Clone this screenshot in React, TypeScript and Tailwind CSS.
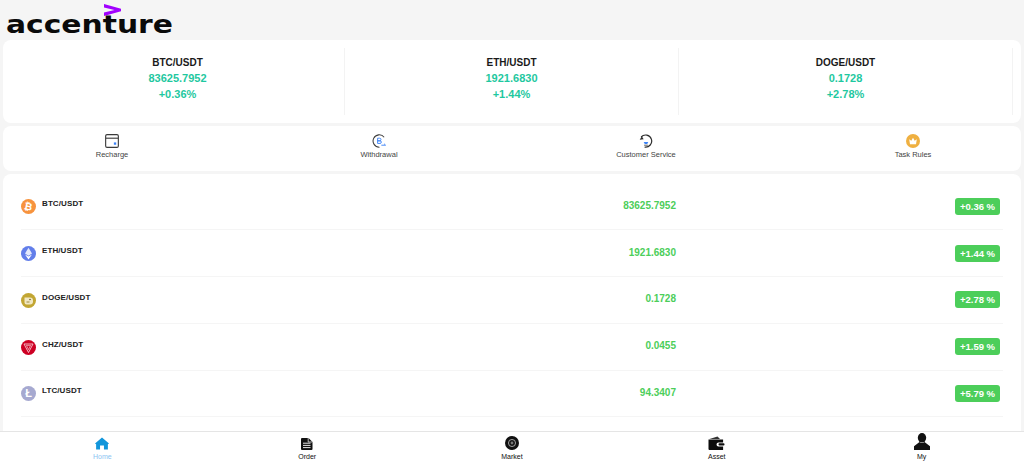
import type { ReactNode } from 'react'

const tickers = [
  { name: 'BTC/USDT', price: '83625.7952', change: '+0.36%' },
  { name: 'ETH/USDT', price: '1921.6830', change: '+1.44%' },
  { name: 'DOGE/USDT', price: '0.1728', change: '+2.78%' },
]

function BtcIcon() {
  return (
    <div className="w-[15px] h-[15px] rounded-full bg-[#f7933e] flex items-center justify-center text-[10px] leading-none font-bold text-white">
      <span className="rotate-12">₿</span>
    </div>
  )
}

function EthIcon() {
  return (
    <svg width="15" height="15" viewBox="0 0 15 15">
      <circle cx="7.5" cy="7.5" r="7.5" fill="#627eea" />
      <path d="M7.5 1.8 11 7.6 7.5 9.7 4 7.6z" fill="#e4e9fb" />
      <path d="M7.5 10.6 11 8.5 7.5 13.4 4 8.5z" fill="#fff" />
    </svg>
  )
}

function DogeIcon() {
  return (
    <svg width="15" height="15" viewBox="0 0 15 15">
      <circle cx="7.5" cy="7.5" r="7.5" fill="#c2a633" />
      <path d="M3.5 4.5h5.5a3 3 0 0 1 3 3v1a3 3 0 0 1-3 3H5.5a2 2 0 0 1-2-2z" fill="#f1e8c4" />
      <circle cx="9" cy="6.5" r="0.8" fill="#6b5a14" />
      <path d="M5.5 9h3" stroke="#8a7420" strokeWidth="0.8" />
    </svg>
  )
}

function ChzIcon() {
  return (
    <svg width="15" height="15" viewBox="0 0 15 15" fill="none">
      <circle cx="7.5" cy="7.5" r="7.5" fill="#cd0124" />
      <path d="M3 4h9L7.5 12.5z" stroke="#f7c6cf" strokeWidth="0.9" />
      <path d="M5.4 5.4h4.2L7.5 9.6z" stroke="#f7c6cf" strokeWidth="0.7" />
    </svg>
  )
}

function LtcIcon() {
  return (
    <div className="w-[15px] h-[15px] rounded-full bg-[#a6a9d0] flex items-center justify-center text-[11px] leading-none font-bold text-white">
      Ł
    </div>
  )
}

const coins = [
  { name: 'BTC/USDT', price: '83625.7952', change: '+0.36 %', icon: <BtcIcon /> },
  { name: 'ETH/USDT', price: '1921.6830', change: '+1.44 %', icon: <EthIcon /> },
  { name: 'DOGE/USDT', price: '0.1728', change: '+2.78 %', icon: <DogeIcon /> },
  { name: 'CHZ/USDT', price: '0.0455', change: '+1.59 %', icon: <ChzIcon /> },
  { name: 'LTC/USDT', price: '94.3407', change: '+5.79 %', icon: <LtcIcon /> },
]

function RechargeIcon() {
  return (
    <svg width="14" height="14" viewBox="0 0 15 15" fill="none">
      <rect x="0.7" y="0.7" width="13.6" height="13.6" rx="1.5" stroke="#3a3a3a" strokeWidth="1.2" />
      <path d="M1 4.5h13" stroke="#3a3a3a" strokeWidth="1.2" />
      <rect x="9.5" y="9" width="2.5" height="2.5" fill="#3b82f6" />
    </svg>
  )
}

function WithdrawIcon() {
  return (
    <svg width="14" height="14" viewBox="0 0 15 15" fill="none">
      <path d="M13 3.5A6.6 6.6 0 1 0 8 14.1" stroke="#3a3a3a" strokeWidth="1.1" />
      <path d="M10 12h4.5M13 10.5l1.5 1.5" stroke="#3b82f6" strokeWidth="1" />
      <path d="M6 4.5h2.2a1.3 1.3 0 0 1 0 2.8H6h2.6a1.4 1.4 0 0 1 0 2.8H6z" stroke="#3b82f6" strokeWidth="1" />
    </svg>
  )
}

function ServiceIcon() {
  return (
    <svg width="14" height="14" viewBox="0 0 15 15" fill="none">
      <path d="M2.3 3.2A6.5 6.5 0 1 1 6 14" stroke="#2f2f2f" strokeWidth="1.3" />
      <path d="M0.8 6.2 3 2.4l2 3.2z" fill="#2f2f2f" />
      <path d="M5 8.6h5l-1.2 2H6.2z" fill="#3b82f6" />
      <path d="M5.5 12h4" stroke="#555" strokeWidth="1" />
    </svg>
  )
}

function CrownIcon() {
  return (
    <svg width="14" height="14" viewBox="0 0 14 14">
      <circle cx="7" cy="7" r="7" fill="#efb041" />
      <path d="M3.2 5.2 5.3 6.8 7 3.8l1.7 3 2.1-1.6-.8 5H4z" fill="#fff" />
    </svg>
  )
}

function HomeIcon() {
  return (
    <svg width="14" height="13" viewBox="0 0 15 13">
      <path d="M7.5 0 15 6.4 13.8 7.4V13H9.6V8.6H5.4V13H1.2V7.4L0 6.4z" fill="#1296db" />
    </svg>
  )
}

function OrderIcon() {
  return (
    <svg width="12" height="12" viewBox="0 0 12 12">
      <path d="M1 0h6.5L11.5 4V11a1 1 0 0 1-1 1H1a1 1 0 0 1-1-1V1a1 1 0 0 1 1-1z" fill="#111" />
      <path d="M2 5.2h7.5M2 7.4h7.5M2 9.6h7.5" stroke="#fff" strokeWidth="0.9" />
      <path d="M7.2 0v4h4" stroke="#fff" strokeWidth="0.7" fill="none" />
    </svg>
  )
}

function MarketIcon() {
  return (
    <svg width="14" height="14" viewBox="0 0 15 15" fill="none">
      <circle cx="7.5" cy="7.5" r="7.5" fill="#111" />
      <circle cx="7.5" cy="7.5" r="3.8" stroke="#bbb" strokeWidth="0.9" />
      <circle cx="7.5" cy="7.5" r="1.5" fill="#777" />
    </svg>
  )
}

function AssetIcon() {
  return (
    <svg width="17" height="14" viewBox="0 0 16 14">
      <path d="M1 3 9 0.5l2.5 2.5z" fill="#333" />
      <path d="M0 3.4h14.6v3H10a2 2 0 0 0 0 4h4.6V14H1a1 1 0 0 1-1-1z" fill="#0c0c0c" />
      <rect x="10" y="7.2" width="6" height="2.4" rx="1" fill="#0c0c0c" />
    </svg>
  )
}

function MyIcon() {
  return (
    <svg width="16" height="17" viewBox="0 0 16 17">
      <ellipse cx="8" cy="4.8" rx="4.2" ry="4.8" fill="#111" />
      <path d="M5.5 9 0 13.2V17H16V13.2L10.5 9Q8 11 5.5 9z" fill="#111" />
    </svg>
  )
}

function ShortcutItem({ icon, label }: { icon: ReactNode; label: string }) {
  return (
    <div className="w-[140px] flex flex-col items-center">
      <div className="h-[15px]">{icon}</div>
      <div className="text-[7.5px] leading-[12px] text-[#444]">{label}</div>
    </div>
  )
}

function NavItem({ icon, label, active }: { icon: ReactNode; label: string; active?: boolean }) {
  return (
    <div className="flex flex-col items-center">
      <div className="h-[18px] flex items-end justify-center">{icon}</div>
      <div className={`text-[7px] leading-[10px] mt-[2px] ${active ? 'text-[#8cc4f2]' : 'text-[#111]'}`}>{label}</div>
    </div>
  )
}

export default function App() {
  return (
    <div className="h-[462px] w-[1024px] overflow-hidden bg-[#f5f5f5] flex flex-col font-['Liberation_Sans',Arial,sans-serif]">
      {/* Logo */}
      <div className="relative h-[40px] shrink-0 pl-[6px]">
        <span className="absolute left-[104px] top-[4px] text-[0px]">
          <svg width="17" height="12" viewBox="0 0 17 15.5" preserveAspectRatio="none">
            <path d="M0 0 17 6V9.5L0 15.5V11L10.5 7.8 0 4.5z" fill="#a100ff" />
          </svg>
        </span>
        <div className="pt-[9px] text-[25px] leading-[32px] font-bold w-fit origin-left scale-x-[1.19] text-[#0a0a0a] font-['DejaVu_Sans',sans-serif]">
          accenture
        </div>
      </div>

      {/* Top tickers */}
      <div className="mx-[3px] h-[83px] shrink-0 rounded-lg bg-white px-[8px] py-[8px] grid grid-cols-3">
        {tickers.map((t) => (
          <div key={t.name} className="flex flex-col items-center pt-[7px] border-r border-[#f3f3f3]">
            <div className="text-[10px] leading-[16px] font-bold text-[#1a1a1a]">{t.name}</div>
            <div className="text-[11px] leading-[15px] font-bold text-[#1fc8a0]">{t.price}</div>
            <div className="text-[11px] leading-[15px] mt-[1px] font-bold text-[#1fc8a0]">{t.change}</div>
          </div>
        ))}
      </div>

      {/* Shortcuts */}
      <div className="mx-[3px] mt-[3px] h-[45px] shrink-0 rounded-lg bg-white flex justify-between pl-[39px] pr-[38px] pt-[8px]">
        <ShortcutItem icon={<RechargeIcon />} label="Recharge" />
        <ShortcutItem icon={<WithdrawIcon />} label="Withdrawal" />
        <ShortcutItem icon={<ServiceIcon />} label="Customer Service" />
        <ShortcutItem icon={<CrownIcon />} label="Task Rules" />
      </div>

      {/* Coin list */}
      <div className="mx-[3px] mt-[3px] flex-1 min-h-0 rounded-t-lg bg-white px-[18px] pt-[9.5px]">
        {coins.map((c) => (
          <div key={c.name} className="h-[46.75px] flex items-center pr-[3px] border-b border-[#f5f5f5]">
            <div className="w-[300px] flex items-start gap-[6px]">
              <div className="mt-[1px]">{c.icon}</div>
              <div className="text-[8px] leading-[12px] font-bold text-[#222] tracking-[0.1px]">{c.name}</div>
            </div>
            <div className="flex-1 text-right mb-[2px] text-[10px] font-bold text-[#4cce5a]">{c.price}</div>
            <div className="w-[324px] flex justify-end">
              <div className="h-[17px] w-[45px] rounded-[3px] bg-[#4cce5a] text-white text-[9.5px] font-bold leading-[17px] text-center">
                {c.change}
              </div>
            </div>
          </div>
        ))}
      </div>

      {/* Bottom nav */}
      <div className="h-[31px] shrink-0 bg-white border-t border-[#e5e5e5] grid grid-cols-5">
        <NavItem icon={<HomeIcon />} label="Home" active />
        <NavItem icon={<OrderIcon />} label="Order" />
        <NavItem icon={<MarketIcon />} label="Market" />
        <NavItem icon={<AssetIcon />} label="Asset" />
        <NavItem icon={<MyIcon />} label="My" />
      </div>
    </div>
  )
}
